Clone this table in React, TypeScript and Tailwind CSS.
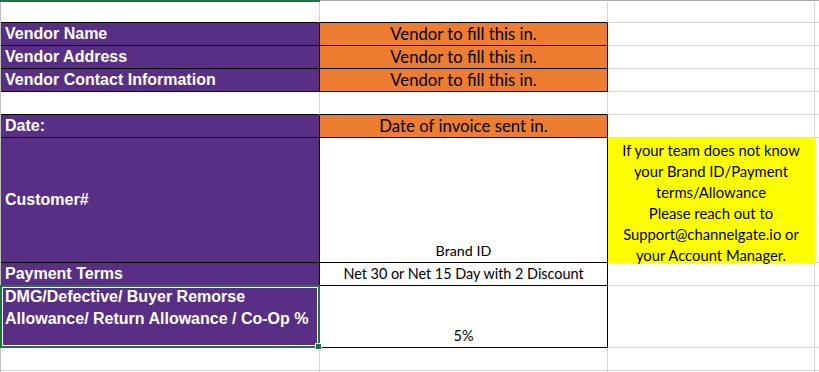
import React from 'react';

// Excel-ish sheet: vendor info form
const PURPLE = 'bg-[#582f84]';

const label = "font-['Liberation_Sans',Arial,sans-serif] font-bold text-[16px] leading-[22px] text-white px-[4px]";
const body = "font-['Lato','Open_Sans',sans-serif] text-black";

export default function App() {
  return (
    <div className="w-[819px] h-[372px] bg-white overflow-hidden relative">
      {/* column header edge */}
      <div className="flex h-[2px]">
        <div className="w-[320px] bg-[#217346]" />
        <div className="flex-1 border-t border-[#ababab]" />
      </div>

      <div className="grid grid-cols-[319px_288px_207px_1fr] grid-rows-[21px_23px_23px_23px_23px_23px_125px_23px_62px_23px_1fr] h-[370px] border-l border-[#c0c0c0]">
        {/* row 1 */}
        <div className="border-r border-b border-r-[#d4d4d4] border-b-black" />
        <div className="border-r border-b border-r-[#d4d4d4] border-b-black" />
        <div className="border-r border-b border-[#d4d4d4]" />
        <div className="border-b border-[#d4d4d4]" />

        {/* vendor rows */}
        {['Vendor Name', 'Vendor Address', 'Vendor Contact Information'].map((t) => (
          <React.Fragment key={t}>
            <div className={`${PURPLE} border-r border-b border-black flex items-center ${label}`}>{t}</div>
            <div className={`bg-[#ed7d31] border-r border-b border-black flex items-center justify-center text-[16.7px] leading-[22px] ${body}`}>
              Vendor to fill this in.
            </div>
            <div className="border-r border-b border-[#d4d4d4]" />
            <div className="border-b border-[#d4d4d4]" />
          </React.Fragment>
        ))}

        {/* empty row */}
        <div className="border-r border-b border-r-[#d4d4d4] border-b-black" />
        <div className="border-r border-b border-r-[#d4d4d4] border-b-black" />
        <div className="border-r border-b border-r-[#d4d4d4] border-b-[#d4d4d4]" />
        <div className="border-b border-[#d4d4d4]" />

        {/* date */}
        <div className={`${PURPLE} border-r border-b border-black flex items-center ${label}`}>Date:</div>
        <div className={`bg-[#ed7d31] border-r border-b border-black flex items-center justify-center text-[16.8px] leading-[22px] ${body}`}>
          Date of invoice sent in.
        </div>
        <div className="border-r border-b border-r-[#d4d4d4] border-b-[#ffff00]" />
        <div className="border-b border-[#d4d4d4]" />

        {/* customer */}
        <div className={`${PURPLE} border-r border-b border-black flex items-center ${label}`}>Customer#</div>
        <div className={`border-r border-b border-black flex items-end justify-center text-[14.3px] leading-[22px] ${body}`}>Brand ID</div>
        <div className={`bg-[#ffff00] border-r border-b border-[#ffff00] flex items-center justify-center text-center pt-[5px] text-[14.8px] leading-[21px] ${body}`}>
          <p>
            If your team does not know
            <br />
            your Brand ID/Payment
            <br />
            terms/Allowance
            <br />
            Please reach out to
            <br />
            Support@channelgate.io or
            <br />
            your Account Manager.
          </p>
        </div>
        <div className="border-b border-[#d4d4d4]" />

        {/* payment terms */}
        <div className={`${PURPLE} border-r border-b border-black flex items-center ${label}`}>Payment Terms</div>
        <div className={`border-r border-b border-black flex items-center justify-center text-[14.4px] leading-[22px] ${body}`}>
          Net 30 or Net 15 Day with 2 Discount
        </div>
        <div className="border-r border-b border-[#d4d4d4]" />
        <div className="border-b border-[#d4d4d4]" />

        {/* allowance */}
        <div className={`${PURPLE} border-r border-b border-black ${label}`}>
          DMG/Defective/ Buyer Remorse Allowance/ Return Allowance / Co-Op %
        </div>
        <div className={`border-r border-b border-black flex items-end justify-center text-[14.4px] leading-[22px] ${body}`}>5%</div>
        <div className="border-r border-b border-[#d4d4d4]" />
        <div className="border-b border-[#d4d4d4]" />

        {/* trailing rows */}
        <div className="border-r border-b border-[#d4d4d4]" />
        <div className="border-r border-b border-[#d4d4d4]" />
        <div className="border-r border-b border-[#d4d4d4]" />
        <div className="border-b border-[#d4d4d4]" />
        <div className="border-r border-[#d4d4d4]" />
        <div className="border-r border-[#d4d4d4]" />
        <div className="border-r border-[#d4d4d4]" />
        <div />
      </div>

      {/* active cell selection */}
      <div className="absolute left-0 top-[285px] w-[320px] h-[63px] border-2 border-[#217346] pointer-events-none">
        <div className="w-full h-full border border-white" />
      </div>
      <div className="absolute left-[315px] top-[343px] w-[7px] h-[7px] bg-[#217346] border border-white" />
    </div>
  );
}
